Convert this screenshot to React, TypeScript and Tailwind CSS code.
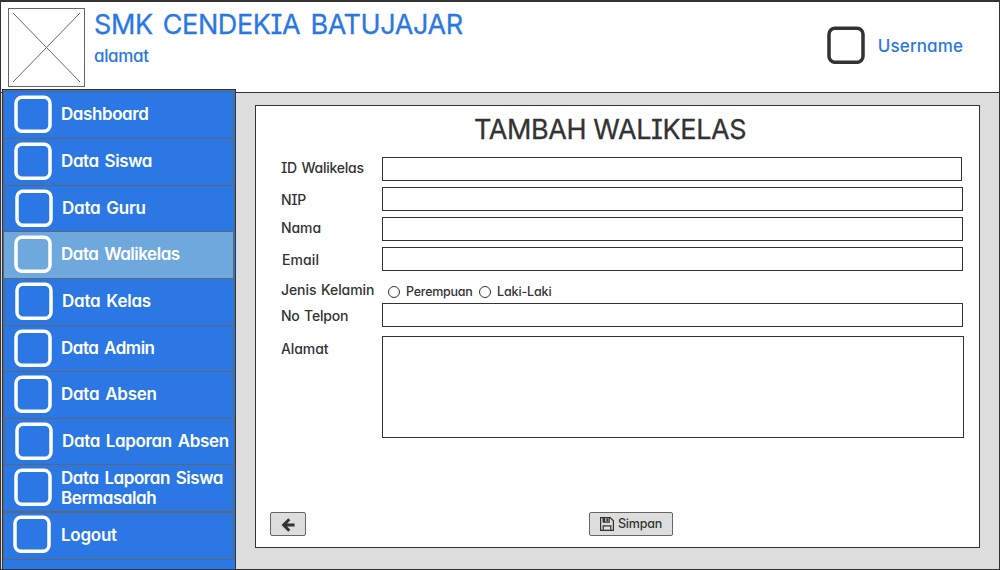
import type { ReactNode } from "react";

type Item = {
  label: ReactNode;
  height: string;
  inset: string;
  icon: string;
  text: string;
  active?: boolean;
};

const plain = "ml-px mr-[1px] w-[231px]";
const shifted = "ml-[2px] w-[231px]";

const menu: Item[] = [
  { label: "Dashboard", height: "h-[47px]", inset: plain, icon: "ml-[10px] mt-[3px]", text: "tracking-[-0.42px] mt-[12px]" },
  { label: "Data Siswa", height: "h-[47px]", inset: plain, icon: "ml-[10px] mt-[3px]", text: "tracking-[-0.4px] mt-[12px]" },
  { label: "Data Guru", height: "h-[46px]", inset: shifted, icon: "ml-[10px] mt-[3px]", text: "tracking-[-0.25px] mt-[12px]" },
  { label: "Data Walikelas", height: "h-[47px]", inset: plain, icon: "ml-[10px] mt-[3px]", text: "tracking-[-0.48px] mt-[12px]", active: true },
  { label: "Data Kelas", height: "h-[47px]", inset: shifted, icon: "ml-[10px] mt-[3px]", text: "tracking-[-0.25px] mt-[12px]" },
  { label: "Data Admin", height: "h-[46px]", inset: plain, icon: "ml-[10px] mt-[3px]", text: "tracking-[-0.5px] mt-[12px]" },
  { label: "Data Absen", height: "h-[47px]", inset: plain, icon: "ml-[10px] mt-[3px]", text: "tracking-[-0.28px] mt-[12px]" },
  { label: "Data Laporan Absen", height: "h-[46px]", inset: shifted, icon: "ml-[10px] mt-[3px]", text: "tracking-[-0.36px] mt-[12px]" },
  { label: <>Data Laporan Siswa<br />Bermasalah</>, height: "h-[48px] border-b", inset: plain, icon: "ml-[10px] mt-[3px]", text: "tracking-[-0.44px] mt-[3px]" },
  { label: "Logout", height: "h-[48px] border-b", inset: plain, icon: "ml-[9px] mr-px mt-[2px]", text: "tracking-[-0.25px] mt-[12px]" },
];

function SquareIcon({ className }: { className: string }) {
  return (
    <svg className={`size-[38px] shrink-0 ${className}`} viewBox="0 0 38 38" fill="none" stroke="currentColor" strokeWidth="3.5">
      <rect x="2" y="2.3" width="34" height="34" rx="6" />
    </svg>
  );
}

function MenuItem({ item }: { item: Item }) {
  return (
    <li className={`flex shrink-0 items-start border-x border-t border-[#5f6672] ${item.height} ${item.inset} ${item.active ? "bg-[#6fa8dc]" : ""}`}>
      <SquareIcon className={`text-white ${item.icon}`} />
      <span className={`ml-[9px] whitespace-nowrap text-[17px] font-semibold leading-5 text-white [word-spacing:2px] ${item.text}`}>{item.label}</span>
    </li>
  );
}

function Field({ label, row, text, box }: { label: string; row: string; text: string; box: string }) {
  return (
    <label className={`flex items-start ${row}`}>
      <span className={`w-[101px] shrink-0 whitespace-nowrap text-[14px] font-medium leading-5 ${text}`}>{label}</span>
      <input className={`border border-[#333] bg-white outline-none ${box}`} />
    </label>
  );
}

function Radio({ label, className }: { label: string; className: string }) {
  return (
    <label className="flex items-center">
      <span className="size-3 rounded-full border border-[#333] bg-white" />
      <span className={`ml-1.5 mt-px whitespace-nowrap text-[12.5px] font-medium leading-5 ${className}`}>{label}</span>
    </label>
  );
}

export default function App() {
  return (
    <div className="flex h-[570px] w-[1000px] flex-col overflow-hidden border border-t-2 border-[#333] bg-[#ddd] font-['Inter',sans-serif] text-[#333] [font-feature-settings:'cv11','cv08']">
      <header className="flex h-[91px] shrink-0 items-start border-b border-[#333] bg-white text-[#2b78e4]">
        <svg className="ml-[7px] mt-[6px] h-[79px] w-[77px] shrink-0" viewBox="0 0 77 79" fill="none" stroke="#666">
          <rect x="0.5" y="0.5" width="76" height="78" />
          <path d="M5 5L72 74M72 5L5 74" />
        </svg>
        <div className="ml-[9px] mt-[7px] whitespace-nowrap">
          <h1 className="text-[27px] leading-8 tracking-[-0.41px] [-webkit-text-stroke:0.3px] [word-spacing:3px]">SMK CENDEKIA BATUJAJAR</h1>
          <p className="mt-[5px] text-[17px] font-medium leading-5 tracking-[-0.35px]">alamat</p>
        </div>
        <div className="ml-auto mr-[36px] mt-[24px] flex items-center">
          <SquareIcon className="text-[#333]" />
          <span className="ml-[13px] mt-px text-[17px] font-medium leading-5 tracking-[0.1px]">Username</span>
        </div>
      </header>
      <div className="flex min-h-0 grow">
        <nav className="relative -mt-1 ml-px flex w-[234px] shrink-0 flex-col border-x border-t border-[#333] bg-[#2b78e4] pt-px">
          <ul className="-ml-px flex w-[234px] flex-col">
            {menu.map((item, i) => <MenuItem key={i} item={item} />)}
          </ul>
        </nav>
        <main className="ml-[19px] mt-[12px] flex h-[443px] w-[725px] flex-col border border-[#333] bg-white pl-[25px]">
          <h2 className="ml-[193px] mt-[8px] whitespace-nowrap text-[27px] leading-8 tracking-[-0.4px] [-webkit-text-stroke:0.3px]">TAMBAH WALIKELAS</h2>
          <form className="mt-[11px] flex flex-col" onSubmit={(e) => e.preventDefault()}>
            <Field label="ID Walikelas" row="h-[30px]" text="mt-px tracking-[-0.25px] [word-spacing:1px]" box="h-6 w-[580px]" />
            <Field label="NIP" row="h-[30px]" text="mt-[3px] tracking-[-0.3px]" box="h-6 w-[581px]" />
            <Field label="Nama" row="h-[30px]" text="mt-px tracking-[-0.1px]" box="h-6 w-[581px]" />
            <Field label="Email" row="h-[33px]" text="mt-[3px] pl-px tracking-[0.1px]" box="h-6 w-[581px]" />
            <div className="flex h-[23px] items-start">
              <span className="w-[107px] whitespace-nowrap text-[14px] font-medium leading-5 tracking-[-0.08px] [word-spacing:1px]">Jenis Kelamin</span>
              <div className="mt-px flex gap-[7px]">
                <Radio label="Perempuan" className="w-[66px] tracking-[-0.25px]" />
                <Radio label="Laki-Laki" className="tracking-[-0.13px]" />
              </div>
            </div>
            <Field label="No Telpon" row="h-[33px]" text="mt-[3px] tracking-[-0.22px] [word-spacing:1px]" box="h-6 w-[581px]" />
            <label className="flex items-start">
              <span className="mt-[3px] w-[101px] shrink-0 text-[14px] font-medium leading-5 tracking-[-0.1px]">Alamat</span>
              <textarea className="h-[102px] w-[582px] resize-none border border-[#333] bg-white outline-none" />
            </label>
            <div className="-ml-[11px] mt-[74px] flex">
              <button type="button" aria-label="Kembali" className="flex h-6 w-9 items-center justify-center rounded-[2px] border border-[#666] bg-[#ddd]">
                <svg className="mt-px size-[14px]" viewBox="0 0 14 14" fill="none" stroke="#333" strokeWidth="3">
                  <path d="M8.3 1.3L2.6 7L8.3 12.7M2.6 7H13.6" />
                </svg>
              </button>
              <button type="submit" className="ml-[283px] flex h-6 w-[84px] items-center rounded-[2px] border border-[#666] bg-[#ddd] pl-[10px]">
                <svg className="size-[14px] shrink-0" viewBox="0 0 14 14" fill="none" stroke="#333" strokeWidth="1.2">
                  <path d="M0.6 0.6H10.2L13.4 3.8V13.4H0.6ZM3.2 13.4V8.8H10.8V13.4M3.2 0.6V5.2H9.2V0.6" />
                  <path d="M3.2 0.8H5.2V5H3.2ZM6.4 1.5H8.2V4.3H6.4Z" fill="#333" stroke="none" />
                </svg>
                <span className="-mt-px ml-[4px] text-[12.5px] font-medium leading-5 tracking-[-0.2px]">Simpan</span>
              </button>
            </div>
          </form>
        </main>
      </div>
    </div>
  );
}
